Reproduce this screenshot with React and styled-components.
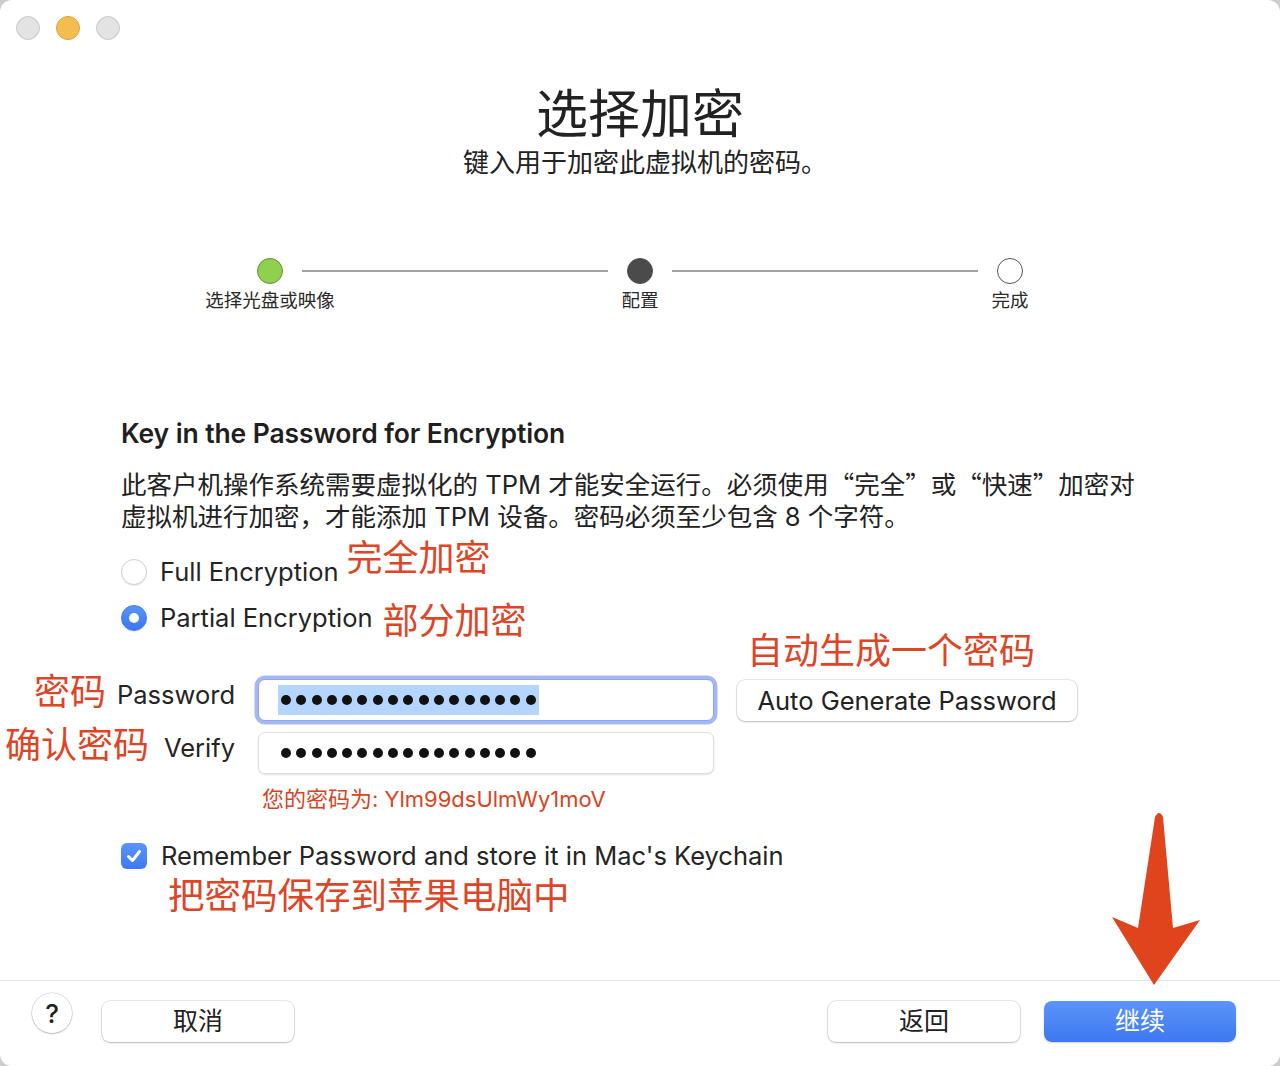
import React from 'react';
import styled, { createGlobalStyle } from 'styled-components';

const GlobalStyle = createGlobalStyle`
  * { box-sizing: border-box; margin: 0; padding: 0; }
  html, body { background: #cdcdcd; }
  body {
    font-family: Inter, "Noto Sans CJK SC", sans-serif;
    color: #242424;
  }
`;

const Window = styled.div`
  position: relative;
  width: 1280px;
  height: 1066px;
  background: #fff;
  border-radius: 12px;
  display: flex;
  flex-direction: column;
  overflow: hidden;
`;

const TitleBar = styled.div`
  height: 56px;
  display: flex;
  align-items: center;
  gap: 16px;
  padding-left: 16px;
`;

const Light = styled.span`
  width: 24px;
  height: 24px;
  border-radius: 50%;
  background: ${p => p.$color};
  border: 1px solid ${p => p.$edge};
`;

const Title = styled.h1`
  margin-top: 29px;
  text-align: center;
  font-size: 52px;
  line-height: 60px;
  font-weight: 400;
  color: #222;
`;

const Subtitle = styled.p`
  margin-top: 2px;
  padding-left: 10px;
  text-align: center;
  font-size: 26px;
  line-height: 32px;
  color: #222;
`;

const Stepper = styled.div`
  display: flex;
  margin: 79px 0 0 238px;
`;

const Step = styled.div`
  width: 64px;
  display: flex;
  flex-direction: column;
  align-items: center;
`;

const StepDot = styled.span`
  width: 26px;
  height: 26px;
  border-radius: 50%;
  background: ${p => (p.$state === 'done' ? '#8fd14f' : p.$state === 'current' ? '#4b4b4b' : '#fff')};
  border: 1.5px solid ${p => (p.$state === 'done' ? '#5f8f35' : p.$state === 'current' ? '#4b4b4b' : '#555')};
`;

const StepLabel = styled.span`
  margin-top: 4px;
  font-size: 18.5px;
  line-height: 24px;
  white-space: nowrap;
  color: #2a2a2a;
`;

const Connector = styled.span`
  width: 306px;
  height: 2px;
  margin-top: 12px;
  background: #a3a3a3;
`;

const Heading = styled.h2`
  margin: 105px 0 0 121px;
  font-size: 26.5px;
  line-height: 32px;
  font-weight: 600;
  letter-spacing: -0.1px;
  color: #1f1f1f;
`;

const Para = styled.p`
  margin: 18px 0 0 121px;
  font-size: 25.5px;
  line-height: 32px;
  color: #222;
  white-space: nowrap;
`;

const Cjk = styled.span`
  font-family: "Noto Sans CJK SC", sans-serif;
`;

const RadioGroup = styled.div`
  margin-top: 16px;
  padding-left: 121px;
`;

const RadioRow = styled.div`
  height: 46px;
  display: flex;
  align-items: center;
  gap: 13px;
`;

const Radio = styled.span`
  position: relative;
  width: 26px;
  height: 26px;
  border-radius: 50%;
  background: ${p => (p.$on ? 'linear-gradient(#5a93f8, #3a77f0)' : '#fff')};
  border: 1px solid ${p => (p.$on ? '#3a77f0' : '#cfcfcf')};
  box-shadow: 0 1px 1px rgba(0, 0, 0, 0.08);
  &::after {
    content: '';
    display: ${p => (p.$on ? 'block' : 'none')};
    position: absolute;
    left: 7px;
    top: 7px;
    width: 10px;
    height: 10px;
    border-radius: 50%;
    background: #fff;
  }
`;

const OptionText = styled.span`
  font-size: 25.5px;
  line-height: 32px;
  white-space: nowrap;
`;

const Note = styled.span`
  font-size: 36px;
  line-height: 0;
  color: #dc4526;
  margin-left: ${p => p.$gap || 0}px;
  vertical-align: ${p => p.$shift || 0}px;
  white-space: nowrap;
`;

const FormGrid = styled.div`
  display: grid;
  grid-template-columns: 235px 456px 340px;
  grid-template-rows: 27px 42px 42px 28px;
  column-gap: 23px;
  row-gap: 11px;
`;

const TopNote = styled.div`
  grid-column: 3;
  grid-row: 1;
  padding-left: 10px;
  font-size: 36px;
  line-height: 20px;
  color: #dc4526;
  white-space: nowrap;
  align-self: start;
`;

const FieldLabel = styled.div`
  grid-column: 1;
  grid-row: ${p => p.$row};
  align-self: start;
  height: 32px;
  display: flex;
  justify-content: flex-end;
  align-items: center;
  gap: ${p => p.$gap}px;
  font-size: 25.5px;
  line-height: 32px;
  white-space: nowrap;
`;

const FieldNote = styled.span`
  font-size: 36px;
  line-height: 32px;
  margin-bottom: 6px;
  color: #dc4526;
`;

const Field = styled.div`
  grid-column: 2;
  grid-row: ${p => p.$row};
  display: flex;
  align-items: center;
  padding-left: 19px;
  background: #fff;
  border-radius: 7px;
  border: 1px solid ${p => (p.$focus ? '#8ea4ee' : '#dedede')};
  box-shadow: ${p => (p.$focus ? '0 0 0 3.5px #a6b8f3' : '0 1px 2px rgba(0,0,0,0.12)')};
`;

const Selection = styled.span`
  display: flex;
  gap: 5.3px;
  padding: 10px 3px;
  background: ${p => (p.$on ? '#b4d5fe' : 'transparent')};
`;

const Bullet = styled.span`
  width: 10px;
  height: 10px;
  border-radius: 50%;
  background: #111;
`;

const PlainButton = styled.button`
  font-family: inherit;
  font-size: 25px;
  color: #222;
  height: 41px;
  width: ${p => p.$w || 192}px;
  background: #fff;
  border: none;
  border-radius: 8px;
  box-shadow: 0 0 0 0.5px rgba(0, 0, 0, 0.18), 0 1px 2px rgba(0, 0, 0, 0.2);
`;

const AutoButton = styled(PlainButton)`
  grid-column: 3;
  grid-row: 2;
  align-self: center;
  font-size: 25.5px;
`;

const Hint = styled.div`
  grid-column: 2;
  grid-row: 4;
  padding-left: 4px;
  font-size: 22px;
  line-height: 28px;
  color: #d8441f;
  white-space: nowrap;
`;

const CheckRow = styled.div`
  margin-top: 27px;
  padding-left: 121px;
  height: 32px;
  display: flex;
  align-items: center;
  gap: 14px;
`;

const CheckBox = styled.span`
  width: 26px;
  height: 26px;
  border-radius: 6px;
  background: linear-gradient(#5a93f8, #3d7af1);
  display: flex;
  align-items: center;
  justify-content: center;
`;

const KeychainNote = styled.div`
  margin: 4px 0 0 168px;
  font-size: 36.5px;
  line-height: 40px;
  color: #dc4526;
  white-space: nowrap;
`;

const Footer = styled.div`
  margin-top: auto;
  height: 86px;
  border-top: 1px solid #e3e3e3;
  display: flex;
  align-items: flex-start;
  padding: 12px 44px 0 32px;
`;

const HelpButton = styled.button`
  font-family: inherit;
  width: 40px;
  height: 40px;
  border-radius: 50%;
  background: #fff;
  border: none;
  box-shadow: 0 0 0 0.5px rgba(0, 0, 0, 0.2), 0 1px 2px rgba(0, 0, 0, 0.2);
  font-size: 26px;
  font-weight: 500;
  color: #222;
`;

const FooterButton = styled(PlainButton)`
  margin-top: 8px;
  padding-bottom: 5px;
  margin-left: ${p => p.$ml || 0}px;
`;

const PrimaryButton = styled(FooterButton)`
  background: linear-gradient(#5b94f8, #3c79f0);
  color: #fff;
  box-shadow: 0 1px 2px rgba(0, 0, 0, 0.2);
`;

const Spacer = styled.span`
  flex: 1;
`;

const Arrow = styled.svg`
  position: absolute;
  left: 1100px;
  top: 805px;
`;

function Dots({ count, selected }) {
  return (
    <Selection $on={selected}>
      {Array.from({ length: count }).map((_, i) => (
        <Bullet key={i} />
      ))}
    </Selection>
  );
}

export default function App() {
  return (
    <Window>
      <GlobalStyle />
      <TitleBar>
        <Light $color="#e3e3e3" $edge="#c9c9c9" />
        <Light $color="#f4be4e" $edge="#d9a23c" />
        <Light $color="#e3e3e3" $edge="#c9c9c9" />
      </TitleBar>

      <Title>选择加密</Title>
      <Subtitle>键入用于加密此虚拟机的密码。</Subtitle>

      <Stepper>
        <Step>
          <StepDot $state="done" />
          <StepLabel>选择光盘或映像</StepLabel>
        </Step>
        <Connector />
        <Step>
          <StepDot $state="current" />
          <StepLabel>配置</StepLabel>
        </Step>
        <Connector />
        <Step>
          <StepDot $state="todo" />
          <StepLabel>完成</StepLabel>
        </Step>
      </Stepper>

      <Heading>Key in the Password for Encryption</Heading>
      <Para>
        此客户机操作系统需要虚拟化的 TPM 才能安全运行。必须使用<Cjk>“完全”</Cjk>或<Cjk>“快速”</Cjk>加密对
        <br />
        虚拟机进行加密，才能添加 TPM 设备。密码必须至少包含 8 个字符。
      </Para>

      <RadioGroup>
        <RadioRow>
          <Radio />
          <OptionText>
            Full Encryption<Note $gap={8} $shift={10}>完全加密</Note>
          </OptionText>
        </RadioRow>
        <RadioRow>
          <Radio $on />
          <OptionText>
            Partial Encryption<Note $gap={10} $shift={-7}>部分加密</Note>
          </OptionText>
        </RadioRow>
      </RadioGroup>

      <FormGrid>
        <TopNote>自动生成一个密码</TopNote>
        <FieldLabel $row={2} $gap={11}>
          <FieldNote>密码</FieldNote>
          <span>Password</span>
        </FieldLabel>
        <Field $row={2} $focus>
          <Dots count={17} selected />
        </Field>
        <AutoButton $w={340}>Auto Generate Password</AutoButton>
        <FieldLabel $row={3} $gap={15}>
          <FieldNote>确认密码</FieldNote>
          <span>Verify</span>
        </FieldLabel>
        <Field $row={3}>
          <Dots count={17} />
        </Field>
        <Hint>您的密码为: Ylm99dsUlmWy1moV</Hint>
      </FormGrid>

      <CheckRow>
        <CheckBox>
          <svg width="18" height="18" viewBox="0 0 18 18">
            <path d="M3.5 9.5 L7.5 13.5 L14.5 4.5" fill="none" stroke="#fff" strokeWidth="3" strokeLinecap="round" strokeLinejoin="round" />
          </svg>
        </CheckBox>
        <OptionText>Remember Password and store it in Mac's Keychain</OptionText>
      </CheckRow>
      <KeychainNote>把密码保存到苹果电脑中</KeychainNote>

      <Footer>
        <HelpButton>?</HelpButton>
        <FooterButton $ml={30}>取消</FooterButton>
        <Spacer />
        <FooterButton>返回</FooterButton>
        <PrimaryButton $ml={24}>继续</PrimaryButton>
      </Footer>

      <Arrow width="110" height="185" viewBox="0 0 110 185">
        <path d="M55 12 Q59 4 63 12 L73 123 L100 115 L54 180 L12 112 L38 123 Z" fill="#e0441c" />
      </Arrow>
    </Window>
  );
}
